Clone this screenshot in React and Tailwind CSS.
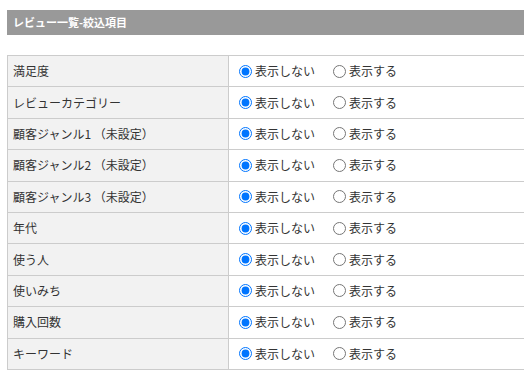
import React from 'react';

const items = [
	'満足度',
	'レビューカテゴリー',
	'顧客ジャンル1 （未設定）',
	'顧客ジャンル2 （未設定）',
	'顧客ジャンル3 （未設定）',
	'年代',
	'使う人',
	'使いみち',
	'購入回数',
	'キーワード',
];

function App() {
	return (
		<div
			className="w-[524px] h-[378px] overflow-hidden bg-white text-[#333]"
			style={{ fontFamily: '"Noto Sans CJK JP", "Noto Sans", sans-serif' }}
		>
			<div className="w-[560px] pl-[7px] pt-[10px]">
				<div className="h-[25px] bg-[#999999] pl-[6px] flex items-center text-white text-[11px] font-bold">
					レビュー一覧-絞込項目
				</div>
				<table className="mt-[20px] w-full border-collapse text-[12px]">
					<tbody>
						{items.map((label, i) => (
							<tr key={i} className="h-[31.4px]">
								<td className="w-[221px] border border-[#cccccc] bg-[#f2f2f2] px-[5px] align-middle">
									{label}
								</td>
								<td className="border border-[#cccccc] px-[5px] align-middle">
									<div className="flex items-center">
										<label className="flex items-center">
											<input
												type="radio"
												name={`item${i}`}
												defaultChecked
												className="m-0 ml-[5px] mr-[3px] w-[13px] h-[13px]"
											/>
											<span>表示しない</span>
										</label>
										<label className="flex items-center ml-[13px]">
											<input
												type="radio"
												name={`item${i}`}
												className="m-0 ml-[5px] mr-[3px] w-[13px] h-[13px]"
											/>
											<span>表示する</span>
										</label>
									</div>
								</td>
							</tr>
						))}
					</tbody>
				</table>
			</div>
		</div>
	);
}

export default App;
